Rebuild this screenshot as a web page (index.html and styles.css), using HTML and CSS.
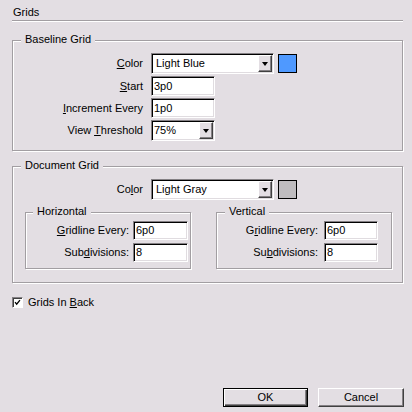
FILE: index.html
```html
<!DOCTYPE html>
<html>
<head>
<meta charset="utf-8">
<link rel="stylesheet" href="styles.css">
</head>
<body>
<div class="dialog">
  <div class="title">Grids</div>

  <div class="group baseline">
    <span class="legend">Baseline Grid</span>
    <div class="form">
      <span class="lbl"><u>C</u>olor</span>
      <div class="ctl">
        <div class="select wide"><span class="val">Light Blue</span><span class="arrow"></span></div>
        <span class="swatch blue"></span>
      </div>
      <span class="lbl"><u>S</u>tart</span>
      <div class="ctl"><div class="input mid">3p0</div></div>
      <span class="lbl"><u>I</u>ncrement Every</span>
      <div class="ctl"><div class="input mid">1p0</div></div>
      <span class="lbl">View <u>T</u>hreshold</span>
      <div class="ctl"><div class="select mid combo"><span class="val">75%</span><span class="arrow"></span></div></div>
    </div>
  </div>

  <div class="group docgrid">
    <span class="legend">Document Grid</span>
    <div class="form">
      <span class="lbl">Co<u>l</u>or</span>
      <div class="ctl">
        <div class="select wide"><span class="val">Light Gray</span><span class="arrow"></span></div>
        <span class="swatch gray"></span>
      </div>
    </div>
    <div class="subs">
      <div class="group sub horiz">
        <span class="legend">Horizontal</span>
        <div class="subform">
          <span class="lbl"><u>G</u>ridline Every:</span>
          <div class="input small">6p0</div>
          <span class="lbl">Sub<u>d</u>ivisions:</span>
          <div class="input small">8</div>
        </div>
      </div>
      <div class="group sub vert">
        <span class="legend">Vertical</span>
        <div class="subform">
          <span class="lbl">G<u>r</u>idline Every:</span>
          <div class="input small">6p0</div>
          <span class="lbl">Su<u>b</u>divisions:</span>
          <div class="input small">8</div>
        </div>
      </div>
    </div>
  </div>

  <div class="checkrow">
    <span class="check">
      <svg width="11" height="11" viewBox="0 0 11 11"><path d="M2.5 5 L4.5 7.5 L8.5 2.5" fill="none" stroke="#000" stroke-width="1.6"/></svg>
    </span>
    <span>Grids In <u>B</u>ack</span>
  </div>

  <div class="btns">
    <div class="btn ok">OK</div>
    <div class="btn">Cancel</div>
  </div>
</div>
</body>
</html>
```

FILE: styles.css
```css
body {
  margin: 0;
  background: #e3dee3;
  font: 11px/13px "Liberation Sans", Arial, sans-serif;
  color: #000;
}

.dialog {
  width: 412px;
  height: 412px;
  box-sizing: border-box;
  padding: 0 9px 5px 12px;
  display: flex;
  flex-direction: column;
}

.title {
  padding: 6px 0 0 1px;
  height: 14px;
  border-bottom: 1px solid #a29ea2;
  box-shadow: 0 1px 0 #fff;
}

.group {
  position: relative;
  box-sizing: border-box;
  border: 1px solid #a29ea2;
  box-shadow: inset 1px 1px 0 #fff, 1px 1px 0 #fff;
}

.legend {
  position: absolute;
  top: -8px;
  left: 8px;
  padding: 0 4px;
  background: #e3dee3;
  line-height: 13px;
}

.baseline {
  margin-top: 19px;
  height: 111px;
  padding-top: 12px;
}

.docgrid {
  margin-top: 15px;
  height: 117px;
  padding-top: 12px;
}

.form {
  display: grid;
  grid-template-columns: 130px auto;
  column-gap: 8px;
  row-gap: 2px;
  align-items: center;
}

.lbl {
  text-align: right;
  white-space: nowrap;
}

.ctl {
  display: flex;
  align-items: center;
  gap: 4px;
}

.input, .select {
  box-sizing: border-box;
  background: #fff;
  border: 1px solid;
  border-color: #848084 #fff #fff #848084;
  box-shadow: inset 1px 1px 0 #000, inset -1px -1px 0 #e0dce0;
  display: flex;
  align-items: center;
  white-space: nowrap;
}

.input {
  height: 20px;
  padding-left: 2px;
}

.select {
  height: 21px;
  padding: 1px;
}

.select .val {
  flex: 1;
  padding-left: 3px;
}

.combo .val {
  padding-left: 1px;
}

.wide { width: 123px; }
.mid { width: 64px; }
.small { width: 55px; height: 19px; }

.arrow {
  width: 14px;
  height: 17px;
  box-sizing: border-box;
  background: #e3dee3;
  border: 1px solid;
  border-color: #fff #404040 #404040 #fff;
  box-shadow: inset -1px -1px 0 #848084;
  display: flex;
  align-items: center;
  justify-content: center;
}

.arrow::after {
  content: "";
  border-left: 3px solid transparent;
  border-right: 3px solid transparent;
  border-top: 4px solid #000;
  margin-left: -1px;
}

.swatch {
  width: 19px;
  height: 19px;
  box-sizing: border-box;
  border: 1px solid #000;
}
.blue { background: #4f99ff; }
.gray { background: #bfbcbf; }

.subs {
  display: flex;
  gap: 25px;
  margin-top: 12px;
  padding-left: 12px;
}

.sub {
  height: 57px;
  padding-top: 8px;
}

.horiz { width: 166px; }
.vert { width: 176px; }

.subform {
  display: grid;
  align-items: center;
  row-gap: 3px;
}

.horiz .subform {
  grid-template-columns: 103px 55px;
  column-gap: 4px;
}

.vert .subform {
  grid-template-columns: 101px 54px;
  column-gap: 6px;
}

.vert .small { width: 54px; }
.horiz .legend { left: 7px; }
.vert .legend { left: 8px; }

.checkrow {
  margin-top: 13px;
  display: flex;
  align-items: center;
  gap: 5px;
}

.check {
  width: 11px;
  height: 11px;
  box-sizing: border-box;
  background: #fff;
  border: 1px solid;
  border-color: #848084 #fff #fff #848084;
  box-shadow: inset 1px 1px 0 #404040;
  display: flex;
}

.check svg {
  width: 9px;
  height: 9px;
}

.btns {
  margin-top: auto;
  margin-right: -1px;
  display: flex;
  justify-content: flex-end;
  gap: 10px;
}

.btn {
  width: 86px;
  height: 19px;
  box-sizing: border-box;
  background: #e3dee3;
  border: 1px solid;
  border-color: #fff #404040 #404040 #fff;
  box-shadow: inset -1px -1px 0 #848084;
  display: flex;
  align-items: center;
  justify-content: center;
}

.ok {
  width: 85px;
  border: 1px solid #000;
  box-shadow: inset 1px 1px 0 #fff, inset -1px -1px 0 #404040, inset -2px -2px 0 #848084;
}
```
